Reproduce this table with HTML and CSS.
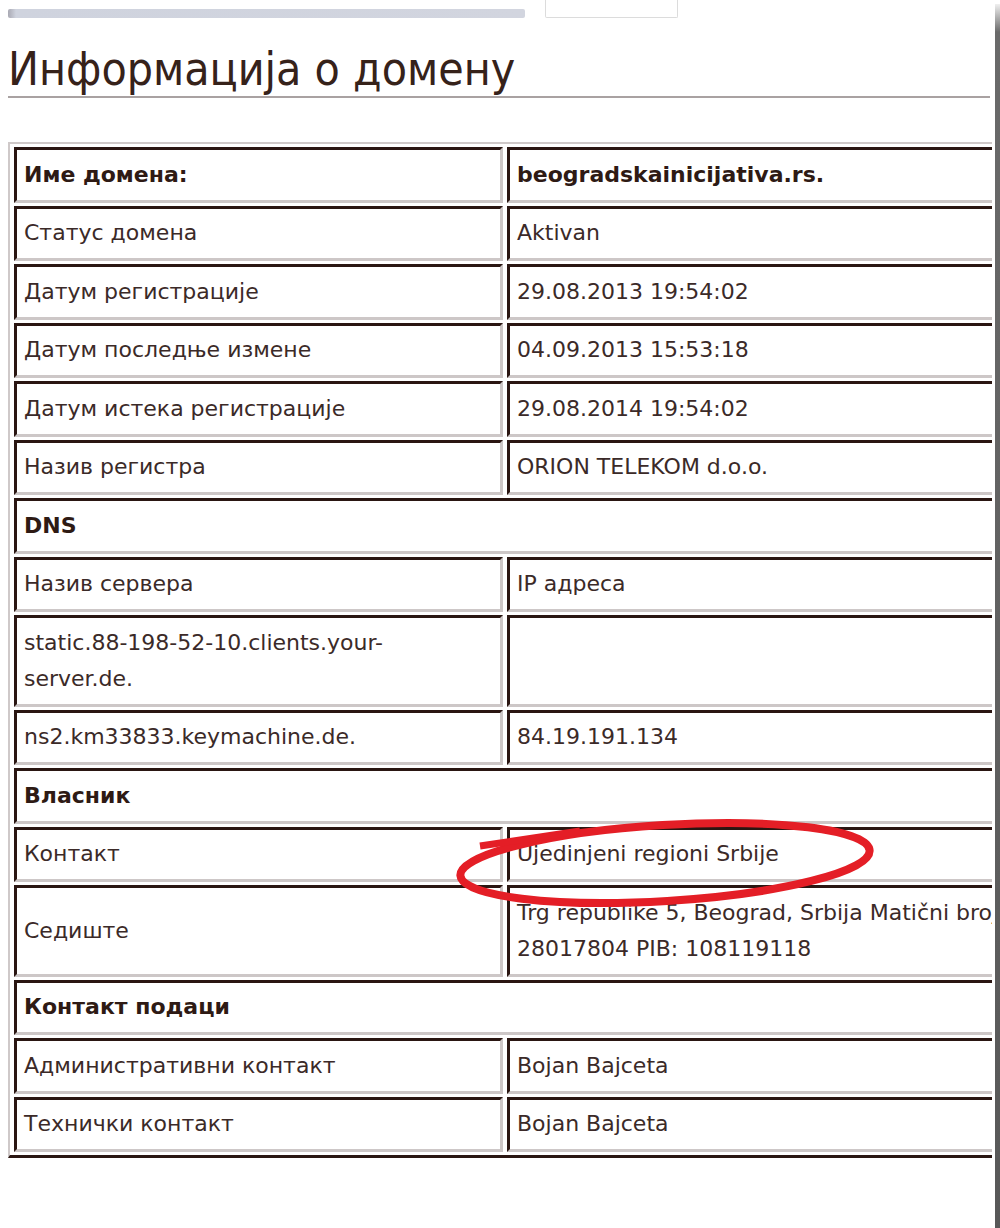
FILE: index.html
```html
<!DOCTYPE html>
<html lang="sr">
<head>
<meta charset="utf-8">
<title>Информација о домену</title>
<link rel="stylesheet" href="styles.css">
</head>
<body>
<div class="screen">
  <div class="page">
    <div class="topbar">
      <div class="progress"></div>
      <div class="tab"></div>
    </div>
    <h1 class="title">Информација о домену</h1>
    <div class="table-wrap">
      <table class="whois">
        <tr><td class="k b">Име домена:</td><td class="v b">beogradskainicijativa.rs.</td></tr>
        <tr><td class="k">Статус домена</td><td class="v">Aktivan</td></tr>
        <tr><td class="k">Датум регистрације</td><td class="v">29.08.2013 19:54:02</td></tr>
        <tr><td class="k">Датум последње измене</td><td class="v">04.09.2013 15:53:18</td></tr>
        <tr><td class="k">Датум истека регистрације</td><td class="v">29.08.2014 19:54:02</td></tr>
        <tr><td class="k">Назив регистра</td><td class="v">ORION TELEKOM d.o.o.</td></tr>
        <tr><td class="b" colspan="2">DNS</td></tr>
        <tr><td class="k">Назив сервера</td><td class="v">IP адреса</td></tr>
        <tr><td class="k">static.88-198-52-10.clients.your-server.de.</td><td class="v"></td></tr>
        <tr><td class="k">ns2.km33833.keymachine.de.</td><td class="v">84.19.191.134</td></tr>
        <tr><td class="b" colspan="2">Власник</td></tr>
        <tr><td class="k">Контакт</td><td class="v">Ujedinjeni regioni Srbije</td></tr>
        <tr><td class="k">Седиште</td><td class="v">Trg republike 5, Beograd, Srbija Matični broj:<br>28017804 PIB: 108119118</td></tr>
        <tr><td class="b" colspan="2">Контакт подаци</td></tr>
        <tr><td class="k">Административни контакт</td><td class="v">Bojan Bajceta</td></tr>
        <tr><td class="k">Технички контакт</td><td class="v">Bojan Bajceta</td></tr>
      </table>
      <svg class="circle" width="440" height="110" viewBox="0 0 440 110" aria-hidden="true">
        <ellipse cx="211" cy="57" rx="205" ry="38" transform="rotate(-3.5 211 57)" fill="none" stroke="#e41e26" stroke-width="8"/>
        <path d="M26 40 L126 25" fill="none" stroke="#e41e26" stroke-width="7" stroke-linecap="butt"/>
      </svg>
    </div>
  </div>
  <div class="edge"></div>
</div>
</body>
</html>
```
FILE: styles.css
```css
html, body {
  margin: 0;
  padding: 0;
  background: #ffffff;
}

.screen {
  display: flex;
  width: 1000px;
  height: 1228px;
  overflow: hidden;
}

.page {
  width: 992px;
  padding-left: 8px;
  overflow: hidden;
  box-sizing: border-box;
  flex: none;
}

.edge {
  width: 5px;
  margin-left: 3px;
  margin-top: 4px;
  flex: none;
  background: linear-gradient(to bottom, #f0f0f0 0px, #6a6a6a 28px, #585858 100%);
}

.topbar {
  display: flex;
  align-items: flex-start;
  height: 20px;
}

.progress {
  width: 517px;
  height: 9px;
  margin-top: 9px;
  border-radius: 2px;
  background: linear-gradient(to right, #a9a9b3 0px, #cfd3de 8px, #d2d5df 100%);
}

.tab {
  width: 131px;
  height: 17px;
  margin-left: 20px;
  border: 1px solid #dcdcdc;
  border-top: none;
  border-radius: 0 0 2px 2px;
}

.title {
  margin: 24px 0 0 0;
  padding: 0 0 2px 0;
  font-family: "DejaVu Sans Condensed", "DejaVu Sans", sans-serif;
  font-stretch: condensed;
  font-weight: normal;
  font-size: 46px;
  line-height: 50px;
  color: #36221a;
  border-bottom: 2px solid #a9a2a2;
  width: 982px;
}

.table-wrap {
  position: relative;
  margin-top: 44px;
}

.whois {
  width: 1060px;
  border-collapse: separate;
  border-spacing: 4px 3px;
  border-top: 2px solid #cfc9c9;
  border-left: 2px solid #cfc9c9;
  border-bottom: 3px solid #2a1612;
  border-right: 3px solid #2a1612;
  font-family: "DejaVu Sans", Verdana, sans-serif;
  font-size: 22px;
  line-height: 36px;
  color: #3b2a28;
}

.whois td {
  padding: 6.75px 8px 6.75px 7px;
  border-top: 3px solid #2a1612;
  border-left: 3px solid #2a1612;
  border-bottom: 3px solid #cdc7c7;
  border-right: 3px solid #cdc7c7;
  vertical-align: middle;
  text-align: left;
}

.whois td.k {
  width: 489px;
  box-sizing: border-box;
}

.whois td.b {
  font-weight: bold;
  color: #2e1a14;
}

.circle {
  position: absolute;
  left: 446px;
  top: 664px;
  pointer-events: none;
}
```
